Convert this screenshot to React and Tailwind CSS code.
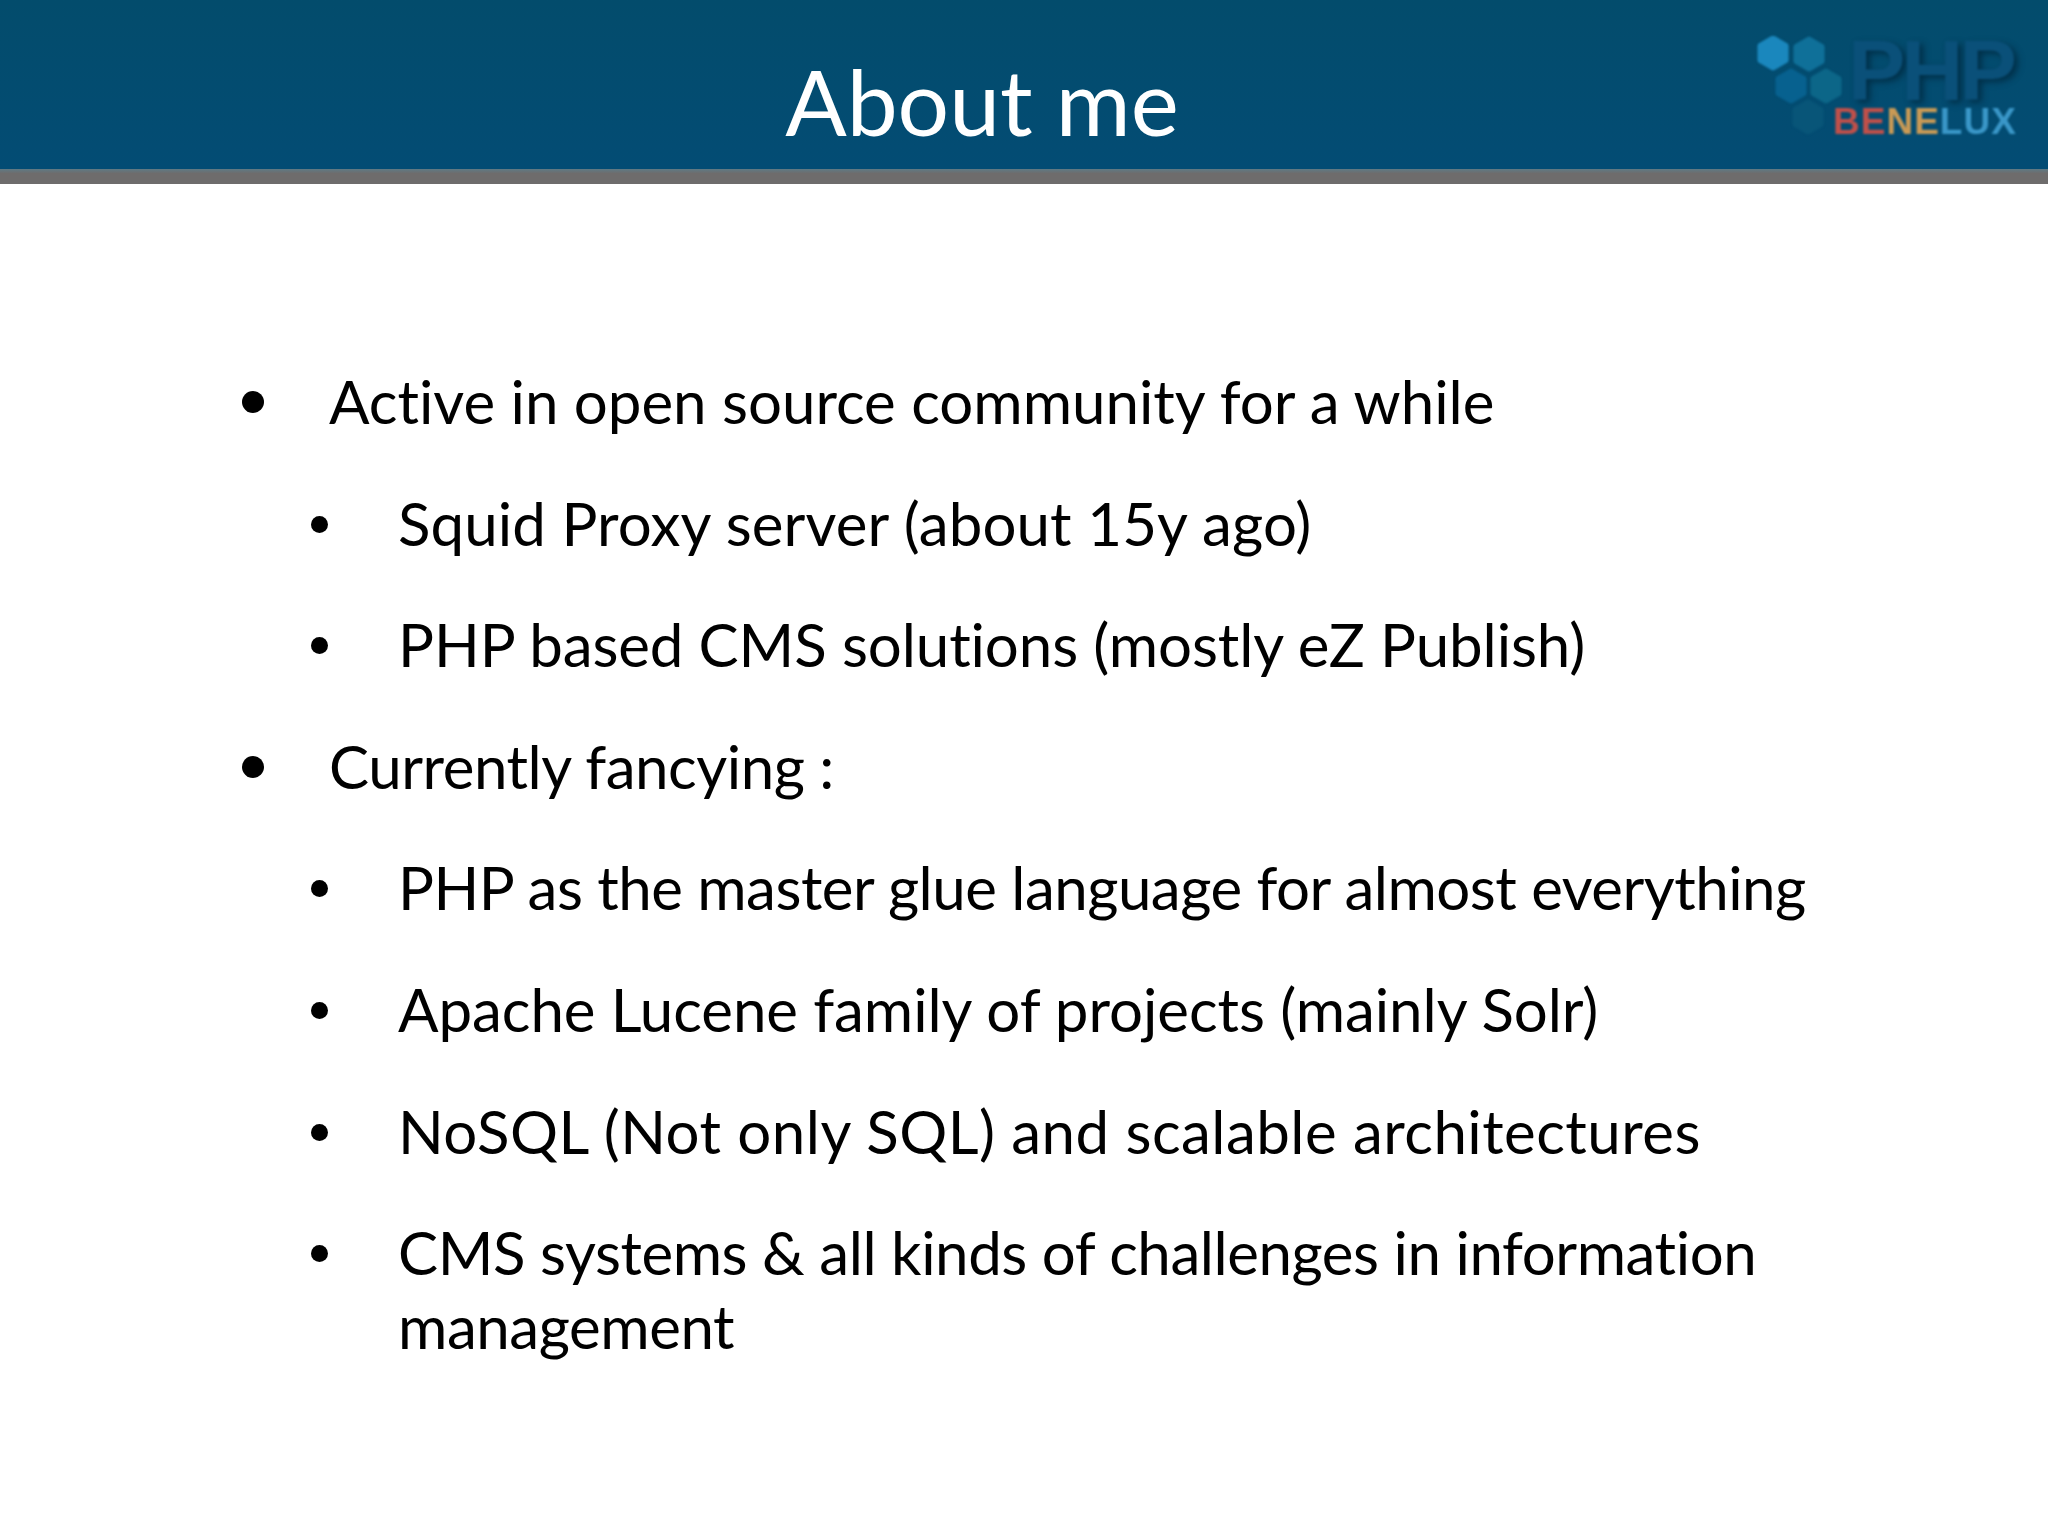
const items = [
  { level: 1, text: "Active in open source community for a while", track: "tracking-[0px]" },
  { level: 2, text: "Squid Proxy server (about 15y ago)", track: "tracking-[0.12px]" },
  { level: 2, text: "PHP based CMS solutions (mostly eZ Publish)", track: "tracking-[-0.1px]" },
  { level: 1, text: "Currently fancying :", track: "tracking-[-0.45px]" },
  { level: 2, text: "PHP as the master glue language for almost everything", track: "tracking-[-0.5px]" },
  { level: 2, text: "Apache Lucene family of projects (mainly Solr)", track: "tracking-[-0.05px]" },
  { level: 2, text: "NoSQL (Not only SQL) and scalable architectures", track: "tracking-[0.47px]" },
  { level: 2, text: "CMS systems & all kinds of challenges in information management", track: "tracking-[-0.43px]" },
];

function Hex({ x, y, fill }) {
  const r = 14.5;
  const pts = [0, 1, 2, 3, 4, 5]
    .map((i) => {
      const a = (Math.PI / 3) * i + Math.PI / 6;
      return `${x + r * Math.cos(a)},${y + r * Math.sin(a)}`;
    })
    .join(" ");
  return <polygon points={pts} fill={fill} stroke={fill} strokeWidth="6" strokeLinejoin="round" />;
}

function Logo() {
  return (
    <div className="absolute left-[1755px] top-[36px] h-[102px] w-[270px] blur-[0.8px]">
      <svg className="absolute left-0 top-0" width="90" height="102" viewBox="0 0 90 102">
        <Hex x={18} y={17} fill="#1a87bd" />
        <Hex x={54} y={18} fill="#0f7099" />
        <Hex x={36} y={50} fill="#07618f" />
        <Hex x={71} y={50} fill="#0c6688" />
        <Hex x={53} y={81} fill="#085578" />
      </svg>
      <div className="absolute left-[93px] top-[2px] font-['Liberation_Sans',sans-serif] text-[86px] font-bold leading-[64px] tracking-[-4px] text-[#0a5079] [text-shadow:4px_3px_6px_#012f48]">
        PHP
      </div>
      <div className="absolute left-[78px] top-[71px] flex font-['Liberation_Sans',sans-serif] text-[37px] font-bold leading-[30px] tracking-[1px]">
        <span className="text-[#c0504a]">BE</span>
        <span className="text-[#c99a55]">NE</span>
        <span className="text-[#3a97c8]">LUX</span>
      </div>
    </div>
  );
}

export default function App() {
  return (
    <div className="flex h-[1536px] w-[2048px] flex-col bg-white font-['Lato','Noto_Sans',sans-serif] [font-variant-ligatures:none]">
      <header className="relative h-[169px] bg-gradient-to-b from-[#034c6c] to-[#034c74]">
        <h1 className="w-[1964px] pt-[48px] text-center text-[91px] font-normal leading-[106px] text-white">
          About me
        </h1>
        <Logo />
      </header>
      <div className="h-[15px] bg-gradient-to-b from-[#5e7a85] via-[#6e6c6c] via-30% to-[#6e6c6c]" />
      <ul className="flex w-[1840px] flex-col gap-[47.6px] pl-[240px] pt-[180px] text-[60px] leading-[74px] text-black">
        {items.map((item) =>
          item.level === 1 ? (
            <li key={item.text} className="flex items-start">
              <span className="mt-[27px] ml-[2px] mr-[65px] h-[22px] w-[22px] shrink-0 rounded-full bg-black" />
              <span className={item.track}>{item.text}</span>
            </li>
          ) : (
            <li key={item.text} className="ml-[71px] flex items-start">
              <span className="mt-[30px] mr-[70px] h-[17px] w-[17px] shrink-0 rounded-full bg-black" />
              <span className={item.track}>{item.text}</span>
            </li>
          )
        )}
      </ul>
    </div>
  );
}
